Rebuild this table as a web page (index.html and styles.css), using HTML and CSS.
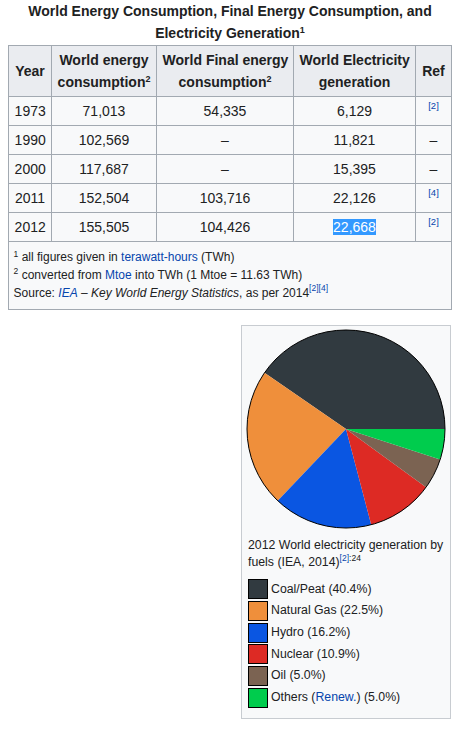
FILE: index.html
```html
<!DOCTYPE html>
<html lang="en">
<head>
<meta charset="utf-8">
<title>World Energy Consumption</title>
<link rel="stylesheet" href="styles.css">
</head>
<body>
<table class="wikitable">
  <caption>World Energy Consumption, Final Energy Consumption, and Electricity Generation<sup class="fn">1</sup></caption>
  <colgroup>
    <col class="c-year"><col class="c-cons"><col class="c-final"><col class="c-elec"><col class="c-ref">
  </colgroup>
  <thead>
    <tr>
      <th>Year</th>
      <th>World energy<br>consumption<sup class="fn">2</sup></th>
      <th>World Final energy<br>consumption<sup class="fn">2</sup></th>
      <th>World Electricity<br>generation</th>
      <th>Ref</th>
    </tr>
  </thead>
  <tbody>
    <tr><td>1973</td><td>71,013</td><td>54,335</td><td>6,129</td><td class="ref"><sup class="cite"><a href="#">[2]</a></sup></td></tr>
    <tr><td>1990</td><td>102,569</td><td>–</td><td>11,821</td><td class="ref">–</td></tr>
    <tr><td>2000</td><td>117,687</td><td>–</td><td>15,395</td><td class="ref">–</td></tr>
    <tr><td>2011</td><td>152,504</td><td>103,716</td><td>22,126</td><td class="ref"><sup class="cite"><a href="#">[4]</a></sup></td></tr>
    <tr><td>2012</td><td>155,505</td><td>104,426</td><td><span class="sel">22,668</span></td><td class="ref"><sup class="cite"><a href="#">[2]</a></sup></td></tr>
  </tbody>
  <tfoot>
    <tr>
      <td colspan="5" class="notes">
        <div class="note"><sup class="fn">1</sup> all figures given in <a href="#">terawatt-hours</a> (TWh)</div>
        <div class="note"><sup class="fn">2</sup> converted from <a href="#">Mtoe</a> into TWh (1 Mtoe = 11.63 TWh)</div>
        <div class="note">Source: <a href="#"><i>IEA</i></a> – <i>Key World Energy Statistics</i>, as per 2014<sup class="cite"><a href="#">[2]</a><a href="#">[4]</a></sup></div>
      </td>
    </tr>
  </tfoot>
</table>

<div class="figure-row">
  <figure class="thumb">
    <svg class="pie" width="200" height="200" viewBox="0 0 200 200">
      <path fill="#313a40" d="M100,100 L199,100 A99,99 0 0 0 18.46,43.85 Z"/>
      <path fill="#ef8f3b" d="M100,100 L18.46,43.85 A99,99 0 0 0 31.74,171.71 Z"/>
      <path fill="#0a56e2" d="M100,100 L31.74,171.71 A99,99 0 0 0 125.22,195.73 Z"/>
      <path fill="#dd2a24" d="M100,100 L125.22,195.73 A99,99 0 0 0 180.09,158.19 Z"/>
      <path fill="#7b6352" d="M100,100 L180.09,158.19 A99,99 0 0 0 194.16,130.59 Z"/>
      <path fill="#00cc4d" d="M100,100 L194.16,130.59 A99,99 0 0 0 199,100 Z"/>
      <circle cx="100" cy="100" r="99" fill="none" stroke="#000" stroke-width="1"/>
    </svg>
    <figcaption class="thumbcaption">
      <div class="cap-text">2012 World electricity generation by fuels (IEA, 2014)<sup class="cite"><a href="#">[2]</a>:24</sup></div>
      <ul class="legend">
        <li><span class="sw sw-coal"></span><span class="lbl">Coal/Peat (40.4%)</span></li>
        <li><span class="sw sw-gas"></span><span class="lbl">Natural Gas (22.5%)</span></li>
        <li><span class="sw sw-hydro"></span><span class="lbl">Hydro (16.2%)</span></li>
        <li><span class="sw sw-nuclear"></span><span class="lbl">Nuclear (10.9%)</span></li>
        <li><span class="sw sw-oil"></span><span class="lbl">Oil (5.0%)</span></li>
        <li><span class="sw sw-other"></span><span class="lbl">Others (<a href="#">Renew.</a>) (5.0%)</span></li>
      </ul>
    </figcaption>
  </figure>
</div>
</body>
</html>
```

FILE: styles.css
```css
html, body {
  background: #ffffff;
}
body {
  margin: 0 0 0 8px;
  font-family: "Liberation Sans", Arial, sans-serif;
  font-size: 14px;
  line-height: 1.6;
  color: #202122;
}
a {
  color: #0645ad;
  text-decoration: none;
}
sup.fn {
  font-size: 9px;
  line-height: 1;
  vertical-align: baseline;
  position: relative;
  top: -0.55em;
}
sup.cite {
  font-size: 9.5px;
  line-height: 1;
  vertical-align: baseline;
  position: relative;
  top: -0.7em;
  font-weight: normal;
  font-style: normal;
}

.wikitable {
  width: 443px;
  table-layout: fixed;
  border-collapse: collapse;
  border: 1px solid #a2a9b1;
  background: #f8f9fa;
  color: #202122;
}
.wikitable caption {
  font-weight: bold;
  text-align: center;
  line-height: 22.4px;
  padding: 0;
}
.c-year { width: 43px; }
.c-cons { width: 105px; }
.c-final { width: 137px; }
.c-elec { width: 122px; }
.c-ref { width: 36px; }

.wikitable th,
.wikitable td {
  border: 1px solid #a2a9b1;
  padding: 2.8px 5.6px;
  text-align: center;
  white-space: nowrap;
}
.wikitable th {
  background: #eaecf0;
  font-weight: bold;
  line-height: 22.4px;
}
.wikitable td {
  line-height: 22.4px;
}
.sel {
  background: #3399ff;
  color: #ffffff;
}
.wikitable td.notes {
  text-align: left;
  font-size: 12px;
  line-height: 17.8px;
  padding: 7px 5.6px 6px 4.6px;
}
.notes sup.fn {
  font-size: 8.5px;
}
.notes sup.cite {
  font-size: 8.5px;
}

.figure-row {
  width: 443px;
  display: flex;
  justify-content: flex-end;
  margin-top: 15px;
}
.thumb {
  margin: 0;
  width: 202px;
  padding: 3px 3px 10px 3px;
  background: #f8f9fa;
  border: 1px solid #c8ccd1;
}
.pie {
  display: block;
  margin: 0 auto;
}
.thumbcaption {
  font-size: 12.3px;
  line-height: 17.4px;
  padding: 8px 0 0 3px;
  color: #202122;
}
.cap-text {
  margin-bottom: 8px;
}
.thumbcaption sup.cite {
  font-size: 8.5px;
  top: -0.55em;
}
.legend {
  list-style: none;
  margin: 0;
  padding: 0;
  display: flex;
  flex-direction: column;
  gap: 1.7px;
}
.legend li {
  display: flex;
  align-items: center;
  gap: 3px;
  height: 20px;
}
.sw {
  width: 18px;
  height: 18px;
  border: 1px solid #000;
  flex: none;
}
.sw-coal { background: #313a40; }
.sw-gas { background: #ef8f3b; }
.sw-hydro { background: #0a56e2; }
.sw-nuclear { background: #dd2a24; }
.sw-oil { background: #7b6352; }
.sw-other { background: #00cc4d; }
```
